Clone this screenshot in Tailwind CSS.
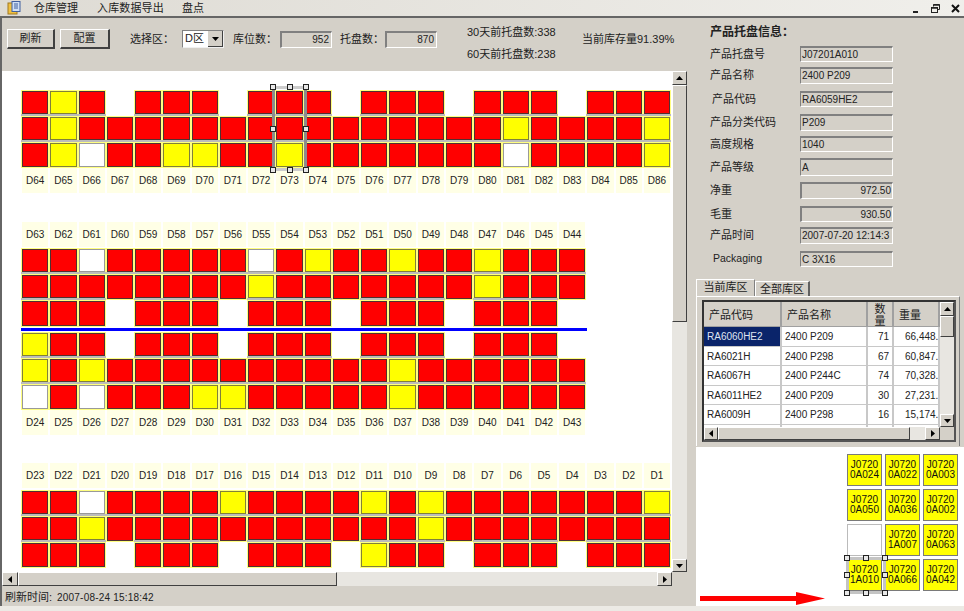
<!DOCTYPE html>
<html>
<head>
<meta charset="utf-8">
<script src="https://cdn.jsdelivr.net/npm/@tailwindcss/browser@4"></script>
</head>
<body class="m-0 overflow-hidden">
<div class="w-[964px] h-[611px] flex flex-col bg-[#d4d0c8] text-[#222] text-[11px] overflow-hidden font-['Liberation_Sans','Noto_Sans_CJK_SC',sans-serif]">
  <!-- menu bar -->
  <div class="h-[18px] shrink-0 flex items-center bg-gradient-to-r from-[#dedbd4] to-[#f0efeb] border-b-2 border-[#666666]">
    <svg class="ml-[7px] shrink-0" width="15" height="14" viewBox="0 0 15 14"><rect x="1" y="2" width="9" height="11" fill="#f0c040" stroke="#a07820"/><rect x="5" y="0.5" width="8" height="10" fill="#cfe0f5" stroke="#4060a0"/><path d="M7 3h4M7 5h4M7 7h4" stroke="#4060a0"/></svg>
    <span class="ml-[12px]">仓库管理</span>
    <span class="ml-[19px] tracking-[0.15px]">入库数据导出</span>
    <span class="ml-[18px]">盘点</span>
    <div class="ml-auto flex items-center gap-[11px] pr-[4px]">
      <svg width="8" height="9" viewBox="0 0 8 9"><rect x="1" y="7" width="5" height="2" fill="#222"/></svg>
      <svg width="9" height="9" viewBox="0 0 9 9" fill="none" stroke="#222"><path d="M2.5 2.5V.5h6v5h-2"/><path d="M2.5 1h6" stroke-width="1.5"/><rect x=".5" y="3.5" width="6" height="5"/><path d="M.5 4h6" stroke-width="1.5"/></svg>
      <svg width="9" height="9" viewBox="0 0 9 9" fill="none" stroke="#111" stroke-width="2"><path d="M1 1l7 7M8 1l-7 7"/></svg>
    </div>
  </div>

  <div class="h-[588px] shrink-0 flex">
    <!-- left column -->
    <div class="w-[688px] shrink-0 flex flex-col border-l-2 border-[#666666]">
      <!-- toolbar -->
      <div class="h-[53px] shrink-0 flex items-center pb-[11px] whitespace-nowrap">
        <button class="ml-[5px] w-[48px] h-[20px] shrink-0 border-t border-l border-white border-r-2 border-b-2 border-r-[#404040] border-b-[#404040] bg-[#d4d0c8] text-[11px]">刷新</button>
        <button class="ml-[5px] w-[50px] h-[20px] shrink-0 border-t border-l border-white border-r-2 border-b-2 border-r-[#404040] border-b-[#404040] bg-[#d4d0c8] text-[11px]">配置</button>
        <span class="ml-[20px] w-[42px] shrink-0">选择区：</span>
        <div class="ml-[10px] w-[42px] h-[18px] shrink-0 flex bg-white border-t border-l border-[#808080] border-r border-b border-r-[#f0f0f0] border-b-[#f0f0f0] pl-[2px]">
          <span class="flex-1 text-[11px] leading-[15px]">D区</span>
          <div class="w-[15px] flex items-center justify-center bg-[#d4d0c8] border-r border-b border-[#404040]">
            <svg width="7" height="4" viewBox="0 0 7 4"><path d="M0 0h7L3.5 4z" fill="#000"/></svg>
          </div>
        </div>
        <span class="ml-[9px] w-[42px] shrink-0">库位数：</span>
        <div class="ml-[5px] w-[52px] h-[17px] shrink-0 text-right pr-[2px] text-[10px] leading-[14px] border-t-2 border-l-2 border-[#808080] border-r border-b border-r-white border-b-white">952</div>
        <span class="ml-[8px] w-[41px] shrink-0">托盘数：</span>
        <div class="ml-[4px] w-[52px] h-[17px] shrink-0 text-right pr-[2px] text-[10px] leading-[14px] border-t-2 border-l-2 border-[#808080] border-r border-b border-r-white border-b-white">870</div>
        <div class="ml-[30px] mt-[8px] w-[88px] shrink-0 flex flex-col gap-[8px] leading-[14px]">
          <span>30天前托盘数:338</span>
          <span>60天前托盘数:238</span>
        </div>
        <span class="ml-[27px] shrink-0">当前库存量91.39%</span>
      </div>

      <!-- canvas + vertical scrollbar -->
      <div class="h-[501px] shrink-0 flex">
        <div class="relative w-[670px] shrink-0 bg-white overflow-hidden pl-[19px] pt-[18.5px]">
          <div id="g1" class="grid grid-cols-[repeat(23,28.27px)]"></div>
          <div id="l1" class="grid grid-cols-[repeat(23,28.27px)] h-[25px]"></div>
          <div id="l2" class="mt-[29px] grid grid-cols-[repeat(20,28.27px)] h-[25px]"></div>
          <div id="g2" class="mt-[1px] grid grid-cols-[repeat(20,28.27px)]"></div>
          <div class="mt-[1px] w-[566px] h-[3px] bg-[#0000ff]"></div>
          <div id="g3" class="mt-[1px] grid grid-cols-[repeat(20,28.27px)]"></div>
          <div id="l3" class="grid grid-cols-[repeat(20,28.27px)] h-[25px]"></div>
          <div id="l4" class="mt-[28px] grid grid-cols-[repeat(23,28.27px)] h-[25px]"></div>
          <div id="g4" class="mt-[1.5px] grid grid-cols-[repeat(23,28.27px)]"></div>

          <!-- selection around D73 -->
          <div class="absolute left-[270px] top-[15px] w-[35px] h-[85px] border-[3px] border-x-[#8c8c8c] border-y-[#cccccc]">
            <i class="absolute left-[-5px] top-[-5px] w-[6px] h-[6px] bg-[#e8e8e8] border border-[#222]"></i>
            <i class="absolute left-[12px] top-[-5px] w-[6px] h-[6px] bg-[#e8e8e8] border border-[#222]"></i>
            <i class="absolute right-[-5px] top-[-5px] w-[6px] h-[6px] bg-[#e8e8e8] border border-[#222]"></i>
            <i class="absolute left-[-5px] top-[37px] w-[6px] h-[6px] bg-[#e8e8e8] border border-[#222]"></i>
            <i class="absolute right-[-5px] top-[37px] w-[6px] h-[6px] bg-[#e8e8e8] border border-[#222]"></i>
            <i class="absolute left-[-5px] bottom-[-5px] w-[6px] h-[6px] bg-[#e8e8e8] border border-[#222]"></i>
            <i class="absolute left-[12px] bottom-[-5px] w-[6px] h-[6px] bg-[#e8e8e8] border border-[#222]"></i>
            <i class="absolute right-[-5px] bottom-[-5px] w-[6px] h-[6px] bg-[#e8e8e8] border border-[#222]"></i>
          </div>
        </div>
        <!-- vertical scrollbar -->
        <div class="w-[15px] shrink-0 flex flex-col bg-[#e8e6e1]">
          <div class="h-[14px] flex items-center justify-center bg-[#d4d0c8] border-t border-l border-white border-r border-b border-r-[#404040] border-b-[#404040]"><svg width="7" height="4" viewBox="0 0 7 4"><path d="M0 4h7L3.5 0z" fill="#000"/></svg></div>
          <div class="h-[237px] bg-[#d4d0c8] border-t border-l border-white border-r border-b border-r-[#404040] border-b-[#404040]"></div>
          <div class="flex-1"></div>
          <div class="h-[13px] flex items-center justify-center bg-[#d4d0c8] border-t border-l border-white border-r border-b border-r-[#404040] border-b-[#404040]"><svg width="7" height="4" viewBox="0 0 7 4"><path d="M0 0h7L3.5 4z" fill="#000"/></svg></div>
        </div>
      </div>

      <!-- horizontal scrollbar -->
      <div class="h-[14px] shrink-0 w-[670px] flex bg-[#e8e6e1]">
        <div class="w-[16px] flex items-center justify-center bg-[#d4d0c8] border-t border-l border-white border-r border-b border-r-[#404040] border-b-[#404040]"><svg width="4" height="7" viewBox="0 0 4 7"><path d="M4 0v7L0 3.5z" fill="#000"/></svg></div>
        <div class="w-[319px] bg-[#d4d0c8] border-t border-l border-white border-r border-b border-r-[#404040] border-b-[#404040]"></div>
        <div class="flex-1"></div>
        <div class="w-[15px] flex items-center justify-center bg-[#d4d0c8] border-t border-l border-white border-r border-b border-r-[#404040] border-b-[#404040]"><svg width="4" height="7" viewBox="0 0 4 7"><path d="M0 0v7l4-3.5z" fill="#000"/></svg></div>
      </div>

      <!-- status bar -->
      <div class="h-[20px] shrink-0 flex items-center pl-[3px] pt-[2px] whitespace-nowrap">
        <span>刷新时间:</span><span class="ml-[5px] text-[10px] tracking-[0.2px]">2007-08-24 15:18:42</span>
      </div>
    </div>

    <!-- right column -->
    <div class="flex-1 flex flex-col min-w-0">
      <div class="pl-[22px] pt-[7px] whitespace-nowrap">
        <div class="font-bold text-[12px] leading-[14px]">产品托盘信息：</div>
        <div class="mt-[7px] h-[16px] flex items-center"><span class="w-[90px]">产品托盘号</span><div class="w-[93px] h-full pl-[1px] text-[10px] leading-[13px] border-t-2 border-l border-[#808080] border-r border-b border-r-white border-b-white">J07201A010</div></div>
        <div class="mt-[5px] h-[17px] flex items-center"><span class="w-[90px]">产品名称</span><div class="w-[93px] h-full pl-[1px] text-[10px] leading-[14px] border-t-2 border-l border-[#808080] border-r border-b border-r-white border-b-white">2400 P209</div></div>
        <div class="mt-[7px] h-[16px] flex items-center"><span class="w-[90px] pl-[2px]">产品代码</span><div class="w-[93px] h-full pl-[1px] text-[10px] leading-[13px] border-t-2 border-l border-[#808080] border-r border-b border-r-white border-b-white">RA6059HE2</div></div>
        <div class="mt-[7px] h-[17px] flex items-center"><span class="w-[90px]">产品分类代码</span><div class="w-[93px] h-full pl-[1px] text-[10px] leading-[14px] border-t-2 border-l border-[#808080] border-r border-b border-r-white border-b-white">P209</div></div>
        <div class="mt-[5px] h-[16px] flex items-center"><span class="w-[90px]">高度规格</span><div class="w-[93px] h-full pl-[1px] text-[10px] leading-[13px] border-t-2 border-l border-[#808080] border-r border-b border-r-white border-b-white">1040</div></div>
        <div class="mt-[6px] h-[18px] flex items-center"><span class="w-[90px]">产品等级</span><div class="w-[93px] h-full pl-[1px] text-[10px] leading-[15px] border-t-2 border-l border-[#808080] border-r border-b border-r-white border-b-white">A</div></div>
        <div class="mt-[6px] h-[17px] flex items-center"><span class="w-[90px]">净重</span><div class="w-[93px] h-full pr-[1px] text-right text-[10px] leading-[14px] border-t-2 border-l-2 border-[#808080] border-r border-b border-r-white border-b-white">972.50</div></div>
        <div class="mt-[7px] h-[16px] flex items-center"><span class="w-[90px]">毛重</span><div class="w-[93px] h-full pr-[1px] text-right text-[10px] leading-[13px] border-t-2 border-l-2 border-[#808080] border-r border-b border-r-white border-b-white">930.50</div></div>
        <div class="mt-[5px] h-[17px] flex items-center"><span class="w-[90px]">产品时间</span><div class="w-[93px] h-full pl-[1px] text-[10px] leading-[14px] overflow-hidden border-t-2 border-l border-[#808080] border-r border-b border-r-white border-b-white">2007-07-20 12:14:3</div></div>
        <div class="mt-[7px] h-[16px] flex items-center"><span class="w-[90px] pl-[3px] text-[10.5px]">Packaging</span><div class="w-[93px] h-full pl-[1px] text-[10px] leading-[13px] border-t-2 border-l border-[#808080] border-r border-b border-r-white border-b-white">C 3X16</div></div>
      </div>

      <!-- tabs -->
      <div class="ml-[8px] mt-[12px] h-[17px] flex items-end whitespace-nowrap">
        <div class="w-[59px] h-[17px] text-center leading-[15px] border-t border-l border-white border-r border-r-[#808080]">当前库区</div>
        <div class="w-[55px] h-[15px] text-center leading-[15px] border-t border-l border-white border-r-2 border-r-[#606060]">全部库区</div>
      </div>
      <div class="ml-[8px] w-[264px] h-[150px] border-t border-l border-white border-r border-r-[#808080] pl-[5px] pt-[3px]">
        <div class="w-[254px] h-[142px] border-2 border-[#333333] border-r-[#555555] border-b-[#555555] grid grid-cols-[236px_14px] grid-rows-[125px_13px] bg-[#d4d0c8]">
          <div class="overflow-hidden">
            <div class="grid grid-cols-[78px_86px_26px_46px] grid-rows-[25px] auto-rows-[19.5px] whitespace-nowrap bg-white text-[10px] [&>div]:border-r-2 [&>div]:border-b [&>div]:border-[#c8c8c8] [&>div]:overflow-hidden [&>div]:leading-[20px]">
              <div class="!bg-[#d4d0c8] !border-[#a0a0a0] pl-[5px] !leading-[27px] text-[11px]">产品代码</div>
              <div class="!bg-[#d4d0c8] !border-[#a0a0a0] pl-[5px] !leading-[27px] text-[11px]">产品名称</div>
              <div class="!bg-[#d4d0c8] !border-[#a0a0a0] text-center !leading-[12px] pt-[1px] text-[11px]">数<br>量</div>
              <div class="!bg-[#d4d0c8] !border-[#a0a0a0] pl-[5px] !leading-[27px] text-[11px]">重量</div>

              <div class="bg-[#0a246a] text-[#dfe3f0] pl-[3px]">RA6060HE2</div><div class="pl-[3px]">2400 P209</div><div class="text-right pr-[3px]">71</div><div class="pl-[11px]">66,448.</div>
              <div class="pl-[3px]">RA6021H</div><div class="pl-[3px]">2400 P298</div><div class="text-right pr-[3px]">67</div><div class="pl-[11px]">60,847.</div>
              <div class="pl-[3px]">RA6067H</div><div class="pl-[3px]">2400 P244C</div><div class="text-right pr-[3px]">74</div><div class="pl-[11px]">70,328.</div>
              <div class="pl-[3px]">RA6011HE2</div><div class="pl-[3px]">2400 P209</div><div class="text-right pr-[3px]">30</div><div class="pl-[11px]">27,231.</div>
              <div class="pl-[3px]">RA6009H</div><div class="pl-[3px]">2400 P298</div><div class="text-right pr-[3px]">16</div><div class="pl-[11px]">15,174.</div>
              <div></div><div></div><div></div><div></div>
            </div>
          </div>
          <div class="flex flex-col bg-[#e8e6e1]">
            <div class="h-[14px] flex items-center justify-center bg-[#d4d0c8] border-t border-l border-white border-r border-b border-r-[#404040] border-b-[#404040]"><svg width="7" height="4" viewBox="0 0 7 4"><path d="M0 4h7L3.5 0z" fill="#000"/></svg></div>
            <div class="h-[21px] bg-[#d4d0c8] border-t border-l border-white border-r border-b border-r-[#404040] border-b-[#404040]"></div>
            <div class="flex-1"></div>
            <div class="h-[13px] flex items-center justify-center bg-[#d4d0c8] border-t border-l border-white border-r border-b border-r-[#404040] border-b-[#404040]"><svg width="7" height="4" viewBox="0 0 7 4"><path d="M0 0h7L3.5 4z" fill="#000"/></svg></div>
          </div>
          <div class="flex bg-[#e8e6e1]">
            <div class="w-[14px] flex items-center justify-center bg-[#d4d0c8] border-t border-l border-white border-r border-b border-r-[#404040] border-b-[#404040]"><svg width="4" height="7" viewBox="0 0 4 7"><path d="M4 0v7L0 3.5z" fill="#000"/></svg></div>
            <div class="w-[192px] bg-[#d4d0c8] border-t border-l border-white border-r border-b border-r-[#404040] border-b-[#404040]"></div>
            <div class="flex-1"></div>
            <div class="w-[15px] flex items-center justify-center bg-[#d4d0c8] border-t border-l border-white border-r border-b border-r-[#404040] border-b-[#404040]"><svg width="4" height="7" viewBox="0 0 4 7"><path d="M0 0v7l4-3.5z" fill="#000"/></svg></div>
          </div>
          <div class="bg-[#d4d0c8]"></div>
        </div>
      </div>

      <!-- bottom white panel -->
      <div class="relative ml-[8px] mt-[1px] flex-1 min-h-0 bg-white flex justify-end pr-[6px] pt-[7px]">
        <div class="grid grid-cols-[repeat(3,35px)] grid-rows-[repeat(4,32px)] gap-[3px] text-[10px] leading-[10.5px] text-center text-[#111] [&>div]:border-[1.5px] [&>div]:border-[#7a7a7a] [&>div]:bg-[#ffff00] [&>div]:flex [&>div]:items-center [&>div]:justify-center">
          <div>J0720<br>0A024</div><div>J0720<br>0A022</div><div>J0720<br>0A003</div>
          <div>J0720<br>0A050</div><div>J0720<br>0A036</div><div>J0720<br>0A002</div>
          <div class="!bg-white !border-[#bbbbbb]"></div><div>J0720<br>1A007</div><div>J0720<br>0A063</div>
          <div>J0720<br>1A010</div><div>J0720<br>0A066</div><div>J0720<br>0A042</div>
        </div>
        <!-- selection on tile -->
        <div class="absolute left-[150px] top-[110px] w-[40px] h-[37px] border-[3px] border-[#c4c4c4]">
          <i class="absolute left-[-5px] top-[-5px] w-[6px] h-[6px] bg-[#e8e8e8] border border-[#222]"></i>
          <i class="absolute left-[14px] top-[-5px] w-[6px] h-[6px] bg-[#e8e8e8] border border-[#222]"></i>
          <i class="absolute right-[-5px] top-[-5px] w-[6px] h-[6px] bg-[#e8e8e8] border border-[#222]"></i>
          <i class="absolute left-[-5px] top-[12px] w-[6px] h-[6px] bg-[#e8e8e8] border border-[#222]"></i>
          <i class="absolute right-[-5px] top-[12px] w-[6px] h-[6px] bg-[#e8e8e8] border border-[#222]"></i>
          <i class="absolute left-[-5px] bottom-[-5px] w-[6px] h-[6px] bg-[#e8e8e8] border border-[#222]"></i>
          <i class="absolute left-[14px] bottom-[-5px] w-[6px] h-[6px] bg-[#e8e8e8] border border-[#222]"></i>
          <i class="absolute right-[-5px] bottom-[-5px] w-[6px] h-[6px] bg-[#e8e8e8] border border-[#222]"></i>
        </div>
        <!-- red arrow -->
        <svg class="absolute left-[4px] top-[145px]" width="126" height="13" viewBox="0 0 126 13"><path d="M0 4h96V0l29 6.5L96 13V9H0z" fill="#ff0000"/></svg>
      </div>
    </div>
  </div>
  <!-- bottom strip -->
  <div class="flex-1 bg-[#eceae5]"></div>
</div>

<script>
var fills = {
  R: "h-full border-[1.5px] bg-[#ff0000] border-[#503030]",
  Y: "h-full border-[1.5px] bg-[#ffff00] border-[#80803a]",
  W: "h-full border-[1.5px] bg-white border-[#999999]"
};
function cells(id, rows) {
  var html = "";
  rows.forEach(function (row, r) {
    for (var c = 0; c < row.length; c++) {
      var k = row[c];
      if (k === "_") { html += '<div class="h-[26.2px]"></div>'; continue; }
      var next = rows[r + 1] && rows[r + 1][c] !== "_";
      var wrap = next
        ? "h-[26.2px] bg-[#ffff80] px-[1px] pt-[1px] border-b-2 border-[#bcbcbc]"
        : "h-[26.2px] bg-[#ffff80] p-[1px]";
      html += '<div class="' + wrap + '"><div class="' + fills[k] + '"></div></div>';
    }
  });
  document.getElementById(id).innerHTML = html;
}
function labels(id, from, to) {
  var html = "", step = from < to ? 1 : -1;
  for (var n = from; ; n += step) {
    html += '<div class="mx-[1px] bg-[#ffffe6] flex items-center justify-center text-[10px] text-[#222]">D' + n + '</div>';
    if (n === to) break;
  }
  document.getElementById(id).innerHTML = html;
}
cells("g1", [
  "RYR_RRR_RRR_RRR_RRR_RRR",
  "RYRRRRRRRRRRRRRRRYRRRRY",
  "RYWRRYYRRYRRRRRRRWRRRRY"
]);
labels("l1", 64, 86);
labels("l2", 63, 44);
cells("g2", [
  "RRWRRRRRWRYRRYRRYRRR",
  "RRRRRRRRYRRRRRRRYRRR",
  "RRR_RRR_RRR_RRR_RRR_"
]);
cells("g3", [
  "YRR_RRR_RRR_RRR_RRR_",
  "YRYRRRRRRRRRRYRRRRRR",
  "WRWRRRYYRRRRRYRRRRRR"
]);
labels("l3", 24, 43);
labels("l4", 23, 1);
cells("g4", [
  "RRWRRRRYRRRRYRYRRRRRRRY",
  "RRYRRRRRRRRRRRYRRRRRRRR",
  "RRR_RRR_RRR_YRR_RRR_RRR"
]);
</script>
</body>
</html>
